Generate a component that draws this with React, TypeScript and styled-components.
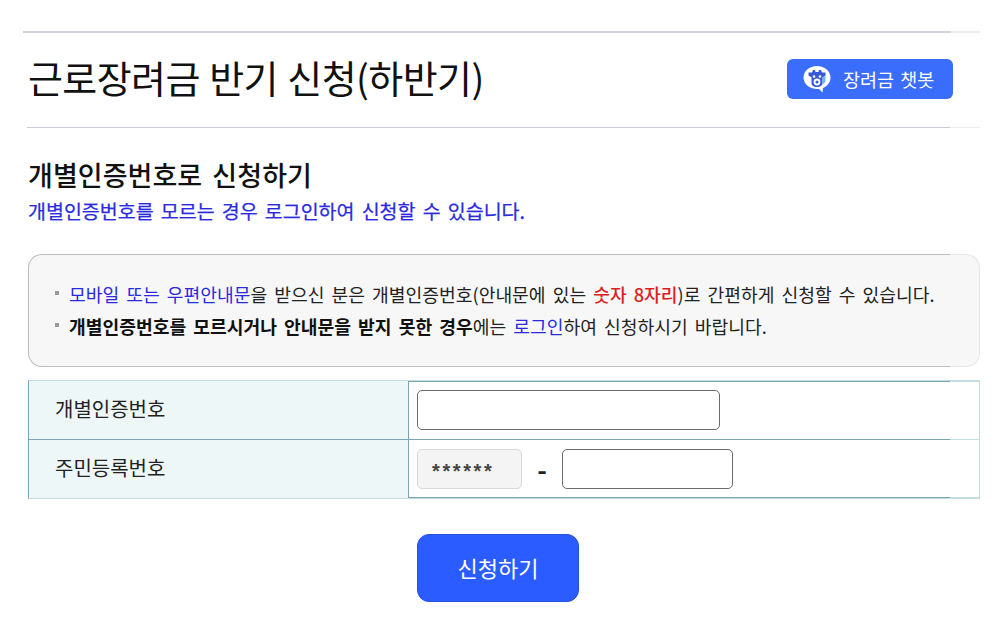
import React from "react";
import styled, { createGlobalStyle } from "styled-components";

const GlobalStyle = createGlobalStyle`
  html, body {
    margin: 0;
    padding: 0;
    background: #fff;
  }
  body {
    font-family: "Noto Sans CJK KR", "Noto Sans", sans-serif;
    color: #1a1a1a;
  }
  * {
    box-sizing: border-box;
  }
`;

const Page = styled.div`
  width: 1000px;
  height: 644px;
  padding: 31px 20px 0 23px;
  overflow: hidden;
`;

const fadeRule = (color: string, light = "#ececf0") =>
  `linear-gradient(to right, ${color}, ${color} 96.9%, ${light} 96.9%, ${light})`;

const Header = styled.header`
  height: 97px;
  padding: 0 27px 5px 5px;
  display: flex;
  align-items: center;
  justify-content: space-between;
  border-top: 2px solid;
  border-image: ${fadeRule("#d2d2da")} 1;
  position: relative;

  &::after {
    content: "";
    position: absolute;
    left: 4px;
    right: 0;
    bottom: 0;
    height: 1px;
    background: ${fadeRule("#cbcbdc")};
  }
`;

const Title = styled.h1`
  margin: -2px 0 0;
  font-size: 38px;
  line-height: 48px;
  font-weight: 400;
  color: #111;
  letter-spacing: -0.6px;
  word-spacing: 1.5px;
`;

const ChatButton = styled.button`
  width: 166px;
  height: 40px;
  margin-top: 2px;
  border: 0;
  border-radius: 6px;
  background: #3a6dfb;
  color: #fff;
  font: inherit;
  font-size: 18.5px;
  word-spacing: 2px;
  display: flex;
  align-items: center;
  gap: 11px;
  padding: 0 0 0 15px;
`;

const Content = styled.main`
  padding-left: 5px;
`;

const SectionTitle = styled.h2`
  margin: 26px 0 0;
  font-size: 27px;
  line-height: 42px;
  font-weight: 500;
  color: #111;
  letter-spacing: 0.05px;
  word-spacing: 4px;
`;

const SectionNote = styled.p`
  margin: 1px 0 0;
  font-size: 19.5px;
  line-height: 28px;
  font-weight: 400;
  color: #2a2ae0;
  word-spacing: 2.8px;
  -webkit-text-stroke: 0.25px #2a2ae0;
`;

const Notice = styled.ul`
  list-style: none;
  margin: 29px 0 0;
  width: 952px;
  height: 113px;
  padding: 23px 0 0 26px;
  border: 1px solid transparent;
  border-radius: 14px;
  background:
    linear-gradient(#f7f7f7, #f7f7f7) padding-box,
    ${fadeRule("#bdbdbd", "#e6e6e6")} border-box;
`;

const NoticeItem = styled.li`
  display: flex;
  gap: 10px;
  font-size: 18.2px;
  line-height: 32px;
  color: #222;
  word-spacing: 3px;
  white-space: pre;

  &::before {
    content: "";
    width: 4px;
    height: 4px;
    margin-top: 13px;
    background: #999;
  }
`;

const Blue = styled.span`
  color: #2a2ae0;
`;

const Red = styled.span`
  color: #dc2020;
  font-weight: 500;
`;

const Strong = styled.strong`
  font-weight: 700;
  color: #111;
`;

const FormTable = styled.div`
  margin-top: 13px;
  width: 952px;
  display: grid;
  grid-template-columns: 380px 1fr;
  grid-template-rows: 58px 1px 58px;
  border: 1px solid #c5dce0;
  border-left-color: #7aa6b4;
  background-image: ${fadeRule("#7aa6b4", "#c5dce0")}, ${fadeRule("#7aa6b4", "#c5dce0")};
  background-repeat: no-repeat;
  background-size: 100% 1px, 100% 1px;
  background-position: 0 0, 0 100%;
`;

const Label = styled.div`
  padding: 0 0 3px 26px;
  display: flex;
  align-items: center;
  font-size: 20px;
  background: #edf7f7;
  border-right: 1px solid #7aa6b4;
  color: #222;
`;

const Cell = styled.div`
  padding: 0 0 0 8px;
  display: flex;
  align-items: center;
  gap: 15px;
`;

const Divider = styled.div`
  grid-column: 1 / -1;
  background: ${fadeRule("#7aa6b4", "#c5dce0")};
`;

const TextField = styled.input<{ $width: number }>`
  width: ${(p) => p.$width}px;
  height: 40px;
  border: 1px solid #6b6b6b;
  border-radius: 5px;
  background: #fff;
`;

const MaskedField = styled.div`
  width: 105px;
  height: 40px;
  padding: 5px 0 0 14px;
  display: flex;
  align-items: center;
  border: 1px solid #d8d8dc;
  border-radius: 5px;
  background: #f4f4f4;
  font-family: "Liberation Sans", sans-serif;
  font-size: 20px;
  font-weight: 700;
  color: #444;
  letter-spacing: 2.6px;
`;

const Dash = styled.span`
  width: 10px;
  font-size: 26px;
  line-height: 40px;
  font-weight: 700;
  color: #222;
  text-align: center;
`;

const Actions = styled.div`
  margin-top: 35px;
  width: 952px;
  display: flex;
  padding-left: 389px;
`;

const SubmitButton = styled.button`
  width: 162px;
  height: 68px;
  border: 1px solid #2350e8;
  border-radius: 12px;
  background: #2b5cff;
  color: #fff;
  font: inherit;
  font-size: 22px;
  padding: 0 0 2px;
`;

function ChatIcon() {
  return (
    <svg width="30" height="28" viewBox="0 0 30 28" aria-hidden="true">
      <path d="M15 1C7.500 1 1.500 6 1.500 12.500S7.500 24 15 24h2l3.500 3.500.5-4.500c4.500-2 7.500-5.700 7.500-10.500C28.500 6 22.500 1 15 1z" fill="#fff" />
      <path d="M6.500 7.500h3.500l1-2.500h2l.5 2h3l.5-2h2l1 2.500h3.500v3l-3 2V18c0 2.600-2.500 4-5.500 4s-5.500-1.400-5.500-4v-5.500l-3-2z" fill="#3858d6" />
      <path d="M20.500 12.500l3-1.500v4c0 2-1.200 3.500-3 4.500z" fill="#6fb4f5" />
      <circle cx="12" cy="11.500" r="1.300" fill="#fff" />
      <circle cx="18" cy="11.500" r="1.300" fill="#fff" />
      <circle cx="15" cy="17" r="3.400" fill="#fff" />
      <circle cx="15" cy="17" r="1.500" fill="#3858d6" />
    </svg>
  );
}

export default function App() {
  return (
    <Page>
      <GlobalStyle />
      <Header>
        <Title>근로장려금 반기 신청(하반기)</Title>
        <ChatButton>
          <ChatIcon />
          장려금 챗봇
        </ChatButton>
      </Header>
      <Content>
        <SectionTitle>개별인증번호로 신청하기</SectionTitle>
        <SectionNote>개별인증번호를 모르는 경우 로그인하여 신청할 수 있습니다.</SectionNote>
        <Notice>
          <NoticeItem>
            <span>
              <Blue>모바일 또는 우편안내문</Blue>을 받으신 분은 개별인증번호(안내문에 있는 <Red>숫자 8자리</Red>)로 간편하게 신청할 수 있습니다.
            </span>
          </NoticeItem>
          <NoticeItem>
            <span>
              <Strong>개별인증번호를 모르시거나 안내문을 받지 못한 경우</Strong>에는 <Blue>로그인</Blue>하여 신청하시기 바랍니다.
            </span>
          </NoticeItem>
        </Notice>
        <FormTable>
          <Label>개별인증번호</Label>
          <Cell>
            <TextField $width={303} />
          </Cell>
          <Divider />
          <Label>주민등록번호</Label>
          <Cell>
            <MaskedField>******</MaskedField>
            <Dash>-</Dash>
            <TextField $width={171} />
          </Cell>
        </FormTable>
        <Actions>
          <SubmitButton>신청하기</SubmitButton>
        </Actions>
      </Content>
    </Page>
  );
}
